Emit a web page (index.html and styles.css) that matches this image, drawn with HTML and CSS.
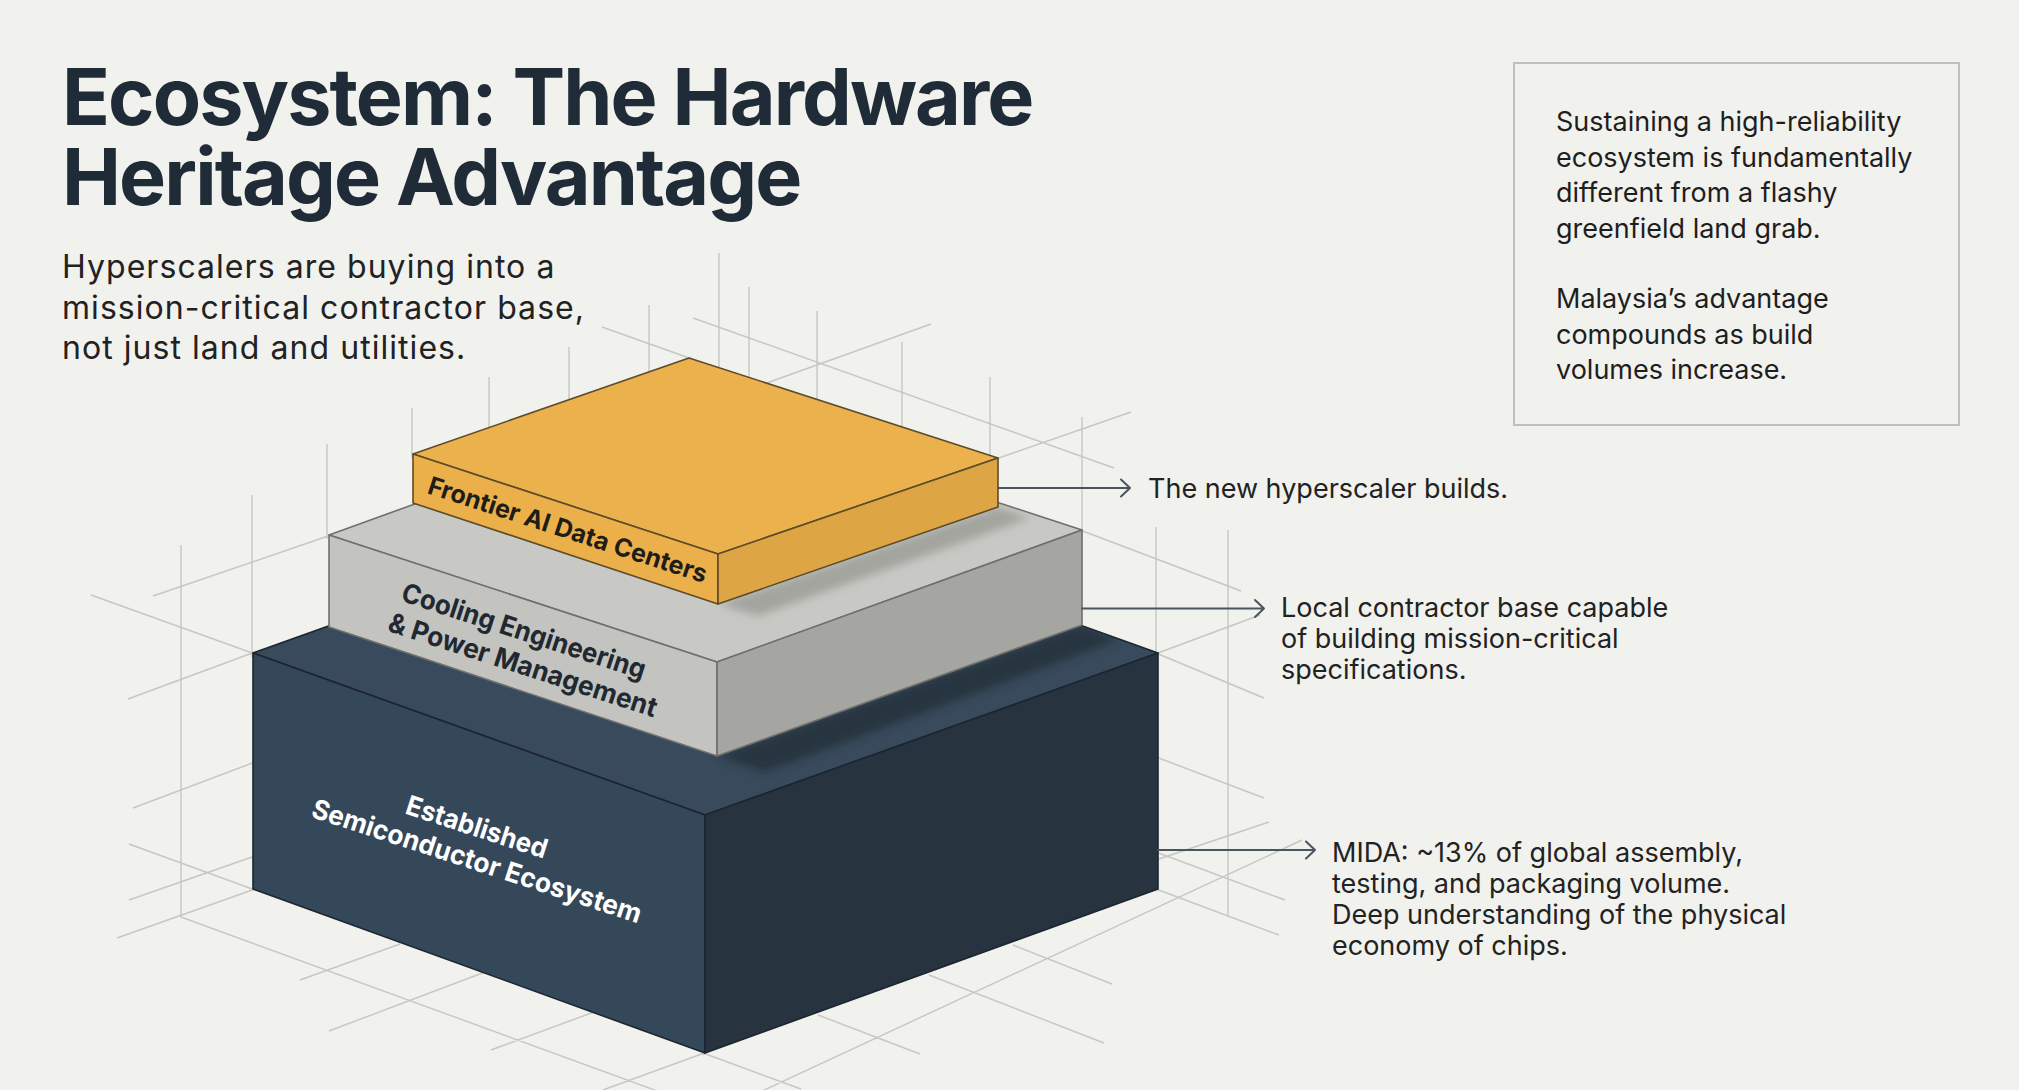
FILE: index.html
```html
<!DOCTYPE html>
<html lang="en">
<head>
<meta charset="utf-8">
<title>Ecosystem: The Hardware Heritage Advantage</title>
<link rel="stylesheet" href="styles.css">
</head>
<body>
<main class="slide">
  <figure class="diagram">
    <svg class="stack" width="2019" height="1090" viewBox="0 0 2019 1090" xmlns="http://www.w3.org/2000/svg">
      <defs>
        <clipPath id="grayTop"><polygon points="329,535 694,403 1082,530 717,662"/></clipPath>
        <clipPath id="darkTop"><polygon points="253,653 706,491 1158,653 705,815"/></clipPath>
        <filter id="soft" x="-20%" y="-50%" width="140%" height="200%"><feGaussianBlur stdDeviation="4"/></filter>
      </defs>

      <path class="grid" d="
        M719 253 V372 M749 287 V381 M649 305 V376 M817 311 V404 M569 347 V404
        M902 342 V431 M489 377 V432 M990 377 V460 M412 408 V458 M327 444 V539
        M1082 417 V534 M252 495 V657 M1156 527 V657 M181 545 V917 M1228 530 V917
        M602 327 L692 359 M693 318 L1114 468 M931 324 L764 384 M1131 412 L996 459
        M153 596 L331 535 M91 595 L255 654 M128 699 L255 652 M1080 530 L1241 591
        M133 808 L255 762 M1158 653 L1260 615 M1156 653 L1264 698 M1156 757 L1264 798
        M1156 860 L1269 822 M1156 889 L1279 935 M1156 852 L1285 900
        M129 844 L255 890 M129 900 L255 856 M117 938 L255 889 M181 917 L660 1092
        M300 980 L400 944 M329 1031 L485 972 M491 1050 L594 1012 M603 1090 L707 1052
        M760 1092 L1302 840 M818 1015 L920 1054 M929 975 L1104 1043 M1013 945 L1112 984
        M703 1053 L801 1089"/>

      <!-- base block -->
      <g class="block dark">
        <polygon class="top" points="253,653 706,491 1158,653 705,815"/>
        <polygon class="left" points="253,653 705,815 705,1053 253,889"/>
        <polygon class="right" points="705,815 1158,653 1158,889 705,1053"/>
      </g>
      <g clip-path="url(#darkTop)">
        <polygon class="shade-dark" filter="url(#soft)" points="717,756 1082,625 1118,640 765,772"/>
      </g>

      <!-- middle block -->
      <g class="block gray">
        <polygon class="top" points="329,535 694,403 1082,530 717,662"/>
        <polygon class="left" points="329,535 717,662 717,756 329,627"/>
        <polygon class="right" points="717,662 1082,530 1082,625 717,756"/>
      </g>
      <g clip-path="url(#grayTop)">
        <polygon class="shade-gray" filter="url(#soft)" points="718,604 998,507 1030,518 758,616"/>
      </g>

      <!-- top block -->
      <g class="block gold">
        <polygon class="top" points="413,454 689,358 998,458 718,554"/>
        <polygon class="left" points="413,454 718,554 718,604 413,503"/>
        <polygon class="right" points="718,554 998,458 998,507 718,604"/>
      </g>

      <text class="face-label on-gold" transform="translate(565 538) rotate(18)" text-anchor="middle" textLength="292" lengthAdjust="spacingAndGlyphs">Frontier AI Data Centers</text>
      <text class="face-label on-gray" transform="translate(521 640) rotate(18)" text-anchor="middle" textLength="255" lengthAdjust="spacingAndGlyphs">Cooling Engineering</text>
      <text class="face-label on-gray" transform="translate(520 674) rotate(18)" text-anchor="middle" textLength="281" lengthAdjust="spacingAndGlyphs">&amp; Power Management</text>
      <text class="face-label on-dark" transform="translate(474 836) rotate(18)" text-anchor="middle" textLength="147" lengthAdjust="spacingAndGlyphs">Established</text>
      <text class="face-label on-dark" transform="translate(474 870) rotate(18)" text-anchor="middle" textLength="345" lengthAdjust="spacingAndGlyphs">Semiconductor Ecosystem</text>

      <g class="arrow">
        <path d="M998 488 H1130 M1121 479.5 L1130 488 L1121 496.5"/>
        <path d="M1082 608.5 H1264 M1255 600 L1264 608.5 L1255 617"/>
        <path d="M1158 850 H1315 M1306 841.5 L1315 850 L1306 858.5"/>
      </g>
    </svg>

    <p class="callout c1">The new hyperscaler builds.</p>
    <p class="callout c2">Local contractor base capable<br>of building mission-critical<br>specifications.</p>
    <p class="callout c3">MIDA: ~13% of global assembly,<br>testing, and packaging volume.<br>Deep understanding of the physical<br>economy of chips.</p>
  </figure>

  <header class="intro">
    <h1 class="title">Ecosystem: The Hardware<br>Heritage Advantage</h1>
    <p class="lede">Hyperscalers are buying into a<br>mission-critical contractor base,<br>not just land and utilities.</p>
  </header>

  <aside class="note">
    <p>Sustaining a high-reliability<br>ecosystem is fundamentally<br>different from a flashy<br>greenfield land grab.</p>
    <p>Malaysia’s advantage<br>compounds as build<br>volumes increase.</p>
  </aside>
</main>
</body>
</html>
```

FILE: styles.css
```css
* {
  box-sizing: border-box;
}

html,
body {
  margin: 0;
  padding: 0;
}

body {
  background: #f1f1ed;
  color: #222222;
  font-family: Inter, "Noto Sans", "Liberation Sans", sans-serif;
}

.slide {
  position: relative;
  width: 2019px;
  height: 1090px;
  overflow: hidden;
  display: grid;
  grid-template-columns: 1fr 447px;
  align-items: start;
  padding: 56px 59px 0 62px;
}

/* diagram canvas: blocks, grid and call-outs live on a free canvas */
.diagram {
  position: absolute;
  inset: 0;
  margin: 0;
}

.stack {
  display: block;
}

.grid {
  fill: none;
  stroke: #c7c7c2;
  stroke-width: 1.4;
}

.block polygon {
  stroke-width: 1.6;
  stroke-linejoin: round;
}

.dark polygon { stroke: #1c2631; }
.dark .top { fill: #384a5b; }
.dark .left { fill: #35485a; }
.dark .right { fill: #27333f; }

.gray polygon { stroke: #6f706c; }
.gray .top { fill: #c8c9c4; }
.gray .left { fill: #c3c4bf; }
.gray .right { fill: #a5a6a1; }

.gold polygon { stroke: #5e4b2a; }
.gold .top { fill: #eab14d; }
.gold .left { fill: #ecb04a; }
.gold .right { fill: #dea544; }

.shade-gray { fill: #a3a49f; }
.shade-dark { fill: #27343f; }

.face-label {
  font-family: Inter, "Noto Sans", "Liberation Sans", sans-serif;
  font-weight: 700;
}

.on-gold {
  font-size: 25px;
  fill: #1f1d18;
}

.on-gray {
  font-size: 27px;
  fill: #222831;
}

.on-dark {
  font-size: 27px;
  fill: #ffffff;
}

.arrow path {
  fill: none;
  stroke: #4a5561;
  stroke-width: 2;
  stroke-linecap: round;
  stroke-linejoin: round;
}

.callout {
  position: absolute;
  margin: 0;
  font-size: 27px;
  line-height: 31px;
  color: #222222;
  white-space: nowrap;
}

.c1 { left: 1148px; top: 473px; }
.c2 { left: 1281px; top: 592px; }
.c3 { left: 1332px; top: 837px; }

/* text column */
.intro {
  position: relative;
  z-index: 1;
}

.title {
  margin: 0;
  font-size: 79px;
  line-height: 80px;
  font-weight: 700;
  color: #1f2b37;
  letter-spacing: -1.9px;
}

.lede {
  margin: 31px 0 0;
  font-size: 32px;
  line-height: 40.5px;
  letter-spacing: 1.05px;
  color: #222222;
}

.note {
  position: relative;
  z-index: 1;
  height: 364px;
  margin-top: 6px;
  padding: 40px 20px 0 41px;
  border: 2px solid #bfbfbb;
  font-size: 27px;
  line-height: 35.5px;
  color: #1e1e1e;
}

.note p {
  margin: 0;
}

.note p + p {
  margin-top: 35px;
}
```
